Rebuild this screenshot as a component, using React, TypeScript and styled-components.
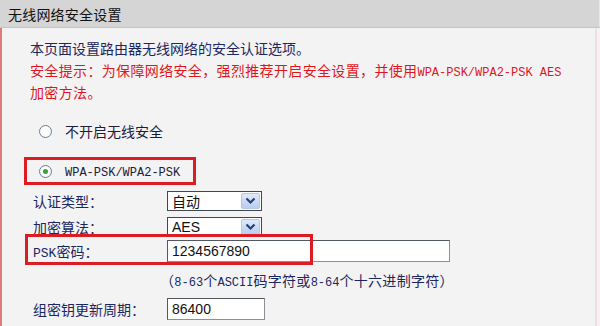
import styled, { createGlobalStyle } from "styled-components";

const GlobalStyle = createGlobalStyle`
  html, body {
    margin: 0;
    padding: 0;
    background: #f4f3f3;
  }
  body {
    font-family: "Noto Sans CJK SC", "Liberation Sans", sans-serif;
    font-size: 14px;
  }
`;

const App = () => {
  return (
    <Page>
      <GlobalStyle />
      <TitleBar>无线网络安全设置</TitleBar>
      <Body>
        <Intro>
          <Line>本页面设置路由器无线网络的安全认证选项。</Line>
          <Line $warn>
            安全提示：为保障网络安全，强烈推荐开启安全设置，并使用
            <Mono>WPA-PSK/WPA2-PSK AES</Mono>
          </Line>
          <Line $warn>加密方法。</Line>
        </Intro>

        <RadioRow>
          <Radio />
          <RadioLabel>不开启无线安全</RadioLabel>
        </RadioRow>

        <RadioRow $highlight>
          <Radio $checked />
          <RadioLabel>
            <Mono>WPA-PSK/WPA2-PSK</Mono>
          </RadioLabel>
        </RadioRow>

        <Form>
          <FormRow $height={26}>
            <Label>认证类型：</Label>
            <Select>
              <SelectValue>自动</SelectValue>
              <SelectArrow>
                <Chevron />
              </SelectArrow>
            </Select>
          </FormRow>
          <FormRow $height={26}>
            <Label>加密算法：</Label>
            <Select>
              <SelectValue $latin>AES</SelectValue>
              <SelectArrow>
                <Chevron />
              </SelectArrow>
            </Select>
          </FormRow>
          <FormRow $height={22}>
            <Label>
              <Mono $size={13}>PSK</Mono>密码：
            </Label>
            <Input $width={283}>1234567890</Input>
            <Highlight />
          </FormRow>
          <Hint>
            （<Mono>8-63</Mono>个<Mono>ASCII</Mono>码字符或<Mono>8-64</Mono>
            个十六进制字符）
          </Hint>
          <FormRow $height={22}>
            <Label>组密钥更新周期：</Label>
            <Input $width={98}>86400</Input>
          </FormRow>
          <Note>（单位为秒，最小值为30，不更新则为0）</Note>
        </Form>
      </Body>
    </Page>
  );
};

const Chevron = () => (
  <svg width="11" height="8" viewBox="0 0 11 8">
    <path
      d="M1.5 1.5 L5.5 5.5 L9.5 1.5"
      fill="none"
      stroke="#2b3f7a"
      strokeWidth="2.2"
    />
  </svg>
);

export default App;

const Page = styled.div`
  width: 600px;
  height: 326px;
  overflow: hidden;
  display: flex;
  flex-direction: column;
  background: #f4f3f3;
`;

const TitleBar = styled.div`
  height: 27px;
  flex-shrink: 0;
  display: flex;
  align-items: center;
  padding-left: 8px;
  background: #d5d5d5;
  border-bottom: 1px solid #c4c4c4;
  box-shadow: inset -7px 0 0 -6px #e6e6e6;
  color: #111;
  font-size: 14px;
  letter-spacing: 0.2px;
`;

const Body = styled.div`
  flex: 1;
  border-left: 2px solid #e27a7a;
  border-right: 2px solid #f2dede;
  margin-right: 3px;
  display: flex;
  flex-direction: column;
`;

const Intro = styled.div`
  padding: 9px 0 0 28px;
`;

const Line = styled.div<{ $warn?: boolean }>`
  height: 22px;
  line-height: 22px;
  white-space: nowrap;
  letter-spacing: ${(p) => (p.$warn ? "0.35px" : "0")};
  color: ${(p) => (p.$warn ? "#e0161e" : "#1b2760")};
`;

const Mono = styled.span<{ $size?: number }>`
  font-family: "Liberation Mono", "DejaVu Sans Mono", monospace;
  font-size: ${(p) => p.$size ?? 12}px;
  letter-spacing: 0;
`;

const RadioRow = styled.div<{ $highlight?: boolean }>`
  display: flex;
  align-items: center;
  gap: 13px;
  height: 22px;
  box-sizing: content-box;
  ${(p) =>
    p.$highlight
      ? `
    width: 154px;
    margin: 15px 0 0 22px;
    padding-left: 12px;
    border: 3px solid #dc1b23;
  `
      : `
    margin: 17px 0 0 0;
    padding-left: 37px;
  `}
`;

const Radio = styled.span<{ $checked?: boolean }>`
  width: 11px;
  height: 11px;
  border-radius: 50%;
  border: 1px solid #6a7f99;
  background: radial-gradient(circle, #ffffff 55%, #e3e6ea 100%);
  display: flex;
  align-items: center;
  justify-content: center;

  &::after {
    content: "";
    width: 5px;
    height: 5px;
    border-radius: 50%;
    background: ${(p) => (p.$checked ? "#3b9f3b" : "transparent")};
  }
`;

const RadioLabel = styled.span`
  color: #1b2038;
  white-space: nowrap;
  line-height: 22px;
`;

const Form = styled.div`
  margin-top: 3px;
  padding-left: 31px;
  display: flex;
  flex-direction: column;
`;

const FormRow = styled.div<{ $height: number }>`
  position: relative;
  height: ${(p) => p.$height}px;
  display: flex;
  align-items: center;
`;

const Label = styled.div`
  width: 134px;
  flex-shrink: 0;
  color: #1b2760;
  white-space: nowrap;
`;

const Select = styled.div`
  width: 95px;
  height: 20px;
  box-sizing: border-box;
  display: flex;
  align-items: stretch;
  background: #fff;
  border: 1px solid #3f4750;
`;

const SelectValue = styled.span<{ $latin?: boolean }>`
  flex: 1;
  padding-left: 4px;
  line-height: 18px;
  color: #111;
  font-family: ${(p) =>
    p.$latin
      ? `"Liberation Sans", Arial, sans-serif`
      : `"Noto Sans CJK SC", sans-serif`};
  font-size: 14px;
`;

const SelectArrow = styled.span`
  width: 17px;
  margin: 1px;
  border-radius: 2px;
  border: 1px solid #b7c8e6;
  background: linear-gradient(#dfe9fb, #b9cdf0);
  display: flex;
  align-items: center;
  justify-content: center;
`;

const Input = styled.div<{ $width: number }>`
  width: ${(p) => p.$width}px;
  height: 22px;
  box-sizing: border-box;
  background: #fff;
  border: 1px solid #52585f;
  border-right-color: #8c9096;
  border-bottom-color: #8c9096;
  padding-left: 4px;
  line-height: 20px;
  font-family: "Liberation Sans", Arial, sans-serif;
  font-size: 14px;
  color: #111;
`;

const Highlight = styled.span`
  position: absolute;
  left: -8px;
  top: -6px;
  width: 288px;
  height: 31px;
  box-sizing: border-box;
  border: 3px solid #dc1b23;
  pointer-events: none;
`;

const Hint = styled.div`
  height: 36px;
  line-height: 36px;
  padding-left: 127px;
  color: #1b2760;
  white-space: nowrap;
  letter-spacing: 0.3px;
`;

const Note = styled.div`
  margin-top: 4px;
  padding-left: 130px;
  color: #9a9a9a;
  line-height: 22px;
  white-space: nowrap;
`;
